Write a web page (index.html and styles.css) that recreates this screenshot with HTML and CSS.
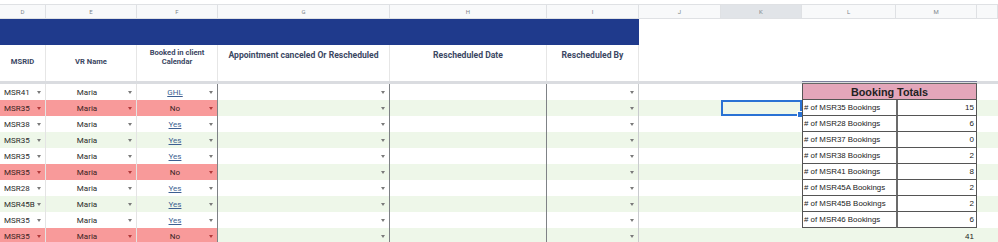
FILE: index.html
```html
<!DOCTYPE html>
<html>
<head>
<meta charset="utf-8">
<link rel="stylesheet" href="styles.css">
</head>
<body>
<div class="sheet">
  <div class="row colhead">
    <div class="c">D</div><div class="c">E</div><div class="c">F</div><div class="c">G</div><div class="c">H</div><div class="c">I</div><div class="c">J</div><div class="c sel">K</div><div class="c">L</div><div class="c">M</div><div class="c"></div>
  </div>
  <div class="row band">
    <div class="blue"></div>
  </div>
  <div class="row titles">
    <div class="t small mid">MSRID</div>
    <div class="t small mid">VR Name</div>
    <div class="t small top">Booked in client<br>Calendar</div>
    <div class="t big">Appointment canceled Or Rescheduled</div>
    <div class="t big">Rescheduled Date</div>
    <div class="t big last">Rescheduled By</div>
  </div>
  <div class="row freeze"><div class="fz-left"></div><div class="fz-tbl"></div><div></div></div>

  <div class="row data w">
    <div class="d id"><span>MSR41</span><i class="ar"></i></div>
    <div class="d nm"><span>Maria</span><i class="ar"></i></div>
    <div class="d bk"><span class="lk">GHL</span><i class="ar"></i></div>
    <div class="d g1"><i class="ar"></i></div>
    <div class="d h1"></div>
    <div class="d i1"><i class="ar"></i></div>
    <div class="d"></div><div class="d"></div>
    <div class="d tothead">Booking Totals</div>
    <div class="d"></div>
  </div>
  <div class="row data g">
    <div class="d id red"><span>MSR35</span><i class="ar"></i></div>
    <div class="d nm red"><span>Maria</span><i class="ar"></i></div>
    <div class="d bk red"><span>No</span><i class="ar"></i></div>
    <div class="d g1"><i class="ar"></i></div>
    <div class="d h1"></div>
    <div class="d i1"><i class="ar"></i></div>
    <div class="d"></div><div class="d ksel"></div>
    <div class="d lab">#&nbsp;of MSR35 Bookings</div><div class="d val">15</div>
    <div class="d"></div>
  </div>
  <div class="row data w">
    <div class="d id"><span>MSR38</span><i class="ar"></i></div>
    <div class="d nm"><span>Maria</span><i class="ar"></i></div>
    <div class="d bk"><span class="lk">Yes</span><i class="ar"></i></div>
    <div class="d g1"><i class="ar"></i></div>
    <div class="d h1"></div>
    <div class="d i1"><i class="ar"></i></div>
    <div class="d"></div><div class="d"></div>
    <div class="d lab">#&nbsp;of MSR28 Bookings</div><div class="d val">6</div>
    <div class="d"></div>
  </div>
  <div class="row data g">
    <div class="d id"><span>MSR35</span><i class="ar"></i></div>
    <div class="d nm"><span>Maria</span><i class="ar"></i></div>
    <div class="d bk"><span class="lk">Yes</span><i class="ar"></i></div>
    <div class="d g1"><i class="ar"></i></div>
    <div class="d h1"></div>
    <div class="d i1"><i class="ar"></i></div>
    <div class="d"></div><div class="d"></div>
    <div class="d lab">#&nbsp;of MSR37 Bookings</div><div class="d val">0</div>
    <div class="d"></div>
  </div>
  <div class="row data w">
    <div class="d id"><span>MSR35</span><i class="ar"></i></div>
    <div class="d nm"><span>Maria</span><i class="ar"></i></div>
    <div class="d bk"><span class="lk">Yes</span><i class="ar"></i></div>
    <div class="d g1"><i class="ar"></i></div>
    <div class="d h1"></div>
    <div class="d i1"><i class="ar"></i></div>
    <div class="d"></div><div class="d"></div>
    <div class="d lab">#&nbsp;of MSR38 Bookings</div><div class="d val">2</div>
    <div class="d"></div>
  </div>
  <div class="row data g">
    <div class="d id red"><span>MSR35</span><i class="ar"></i></div>
    <div class="d nm red"><span>Maria</span><i class="ar"></i></div>
    <div class="d bk red"><span>No</span><i class="ar"></i></div>
    <div class="d g1"><i class="ar"></i></div>
    <div class="d h1"></div>
    <div class="d i1"><i class="ar"></i></div>
    <div class="d"></div><div class="d"></div>
    <div class="d lab">#&nbsp;of MSR41 Bookings</div><div class="d val">8</div>
    <div class="d"></div>
  </div>
  <div class="row data w">
    <div class="d id"><span>MSR28</span><i class="ar"></i></div>
    <div class="d nm"><span>Maria</span><i class="ar"></i></div>
    <div class="d bk"><span class="lk">Yes</span><i class="ar"></i></div>
    <div class="d g1"><i class="ar"></i></div>
    <div class="d h1"></div>
    <div class="d i1"><i class="ar"></i></div>
    <div class="d"></div><div class="d"></div>
    <div class="d lab">#&nbsp;of MSR45A Bookings</div><div class="d val">2</div>
    <div class="d"></div>
  </div>
  <div class="row data g">
    <div class="d id"><span>MSR45B</span><i class="ar"></i></div>
    <div class="d nm"><span>Maria</span><i class="ar"></i></div>
    <div class="d bk"><span class="lk">Yes</span><i class="ar"></i></div>
    <div class="d g1"><i class="ar"></i></div>
    <div class="d h1"></div>
    <div class="d i1"><i class="ar"></i></div>
    <div class="d"></div><div class="d"></div>
    <div class="d lab">#&nbsp;of MSR45B Bookings</div><div class="d val">2</div>
    <div class="d"></div>
  </div>
  <div class="row data w">
    <div class="d id"><span>MSR35</span><i class="ar"></i></div>
    <div class="d nm"><span>Maria</span><i class="ar"></i></div>
    <div class="d bk"><span class="lk">Yes</span><i class="ar"></i></div>
    <div class="d g1"><i class="ar"></i></div>
    <div class="d h1"></div>
    <div class="d i1"><i class="ar"></i></div>
    <div class="d"></div><div class="d"></div>
    <div class="d lab">#&nbsp;of MSR46 Bookings</div><div class="d val">6</div>
    <div class="d"></div>
  </div>
  <div class="row data g">
    <div class="d id red"><span>MSR35</span><i class="ar"></i></div>
    <div class="d nm red"><span>Maria</span><i class="ar"></i></div>
    <div class="d bk red"><span>No</span><i class="ar"></i></div>
    <div class="d g1"><i class="ar"></i></div>
    <div class="d h1"></div>
    <div class="d i1"><i class="ar"></i></div>
    <div class="d"></div><div class="d"></div>
    <div class="d"></div><div class="d sum">41</div>
    <div class="d"></div>
  </div>
</div>
</body>
</html>
```
FILE: styles.css
```css
* { box-sizing: border-box; }
html, body { margin: 0; padding: 0; background: #fff; overflow: hidden; }
body { font-family: Roboto, "Liberation Sans", Arial, sans-serif; color: #2a2a2a; }

.sheet { padding-top: 4px; width: 998px; }

.row {
  display: grid;
  grid-template-columns: 46px 91px 81px 172px 157px 92px 82px 81px 94px 81px 21px;
}

/* column letters */
.colhead { height: 15px; }
.colhead .c {
  background: #f8f9fa;
  border-top: 1px solid #dfe1e4;
  border-bottom: 1px solid #dfe1e4;
  border-right: 1px solid #dfe1e4;
  font-size: 6px;
  color: #80868b;
  display: flex;
  align-items: center;
  justify-content: center;
}
.colhead .c.sel { background: #e1e4e8; }

/* blue band */
.band { height: 26px; }
.band .blue { grid-column: 1 / 7; background: #1f3a8c; }

/* titles */
.titles { height: 36px; }
.titles .t {
  display: flex;
  justify-content: center;
  text-align: center;
  font-weight: 700;
  color: #3b4763;
  border-right: 1px solid #e6e6e6;
}
.titles .t.last { border-right: 1px solid #e6e6e6; }
.titles .small { font-size: 7.6px; line-height: 9px; }
.titles .mid { align-items: center; padding-bottom: 4px; }
.titles .top { align-items: flex-start; padding-top: 3px; }
.titles .big { font-size: 8.6px; line-height: 11px; align-items: flex-start; padding-top: 5px; }

/* freeze line */
.freeze { height: 3px; }
.freeze .fz-left { grid-column: 1 / 9; background: #dadce0; }
.freeze .fz-tbl { grid-column: 9 / 11; background: #dadce0; border-top: 1px solid #7c7f9c; border-bottom: 1px solid #666; }
.freeze > div:last-child { background: #dadce0; }

/* data rows */
.data { height: 16px; font-size: 8px; }
.data.w { background: #fff; }
.data.g { background: #eef7e9; }
.d { display: flex; align-items: center; position: relative; min-width: 0; }
.d.red { background: #f89a9a; color: #3a1f1f; }

.d.id { border-right: 1px solid #e4e4e4; padding-left: 4px; justify-content: space-between; }
.d.nm { border-right: 1px solid #e4e4e4; }
.d.nm span, .d.bk span { flex: 1; text-align: center; }
.d.bk span { padding-left: 4px; }
.d.bk { border-right: 1px solid #7f8286; }
.d.g1 { border-right: 1px solid #7f8286; justify-content: flex-end; }
.d.h1 { border-right: 1px solid #7f8286; }
.d.i1 { border-right: 1px solid #c9cbce; justify-content: flex-end; }

.lk { color: #3d5f91; text-decoration: underline; }

.ar {
  display: block;
  width: 0; height: 0;
  border-left: 2.5px solid transparent;
  border-right: 2.5px solid transparent;
  border-top: 3px solid #7a7a7a;
  margin-right: 4px;
  flex: none;
}
.d.red .ar { border-top-color: #b23a3a; }

/* selected cell */
.ksel { border: 2px solid #2a72d4; }
.ksel::after {
  content: "";
  position: absolute;
  right: -4px;
  bottom: -4px;
  width: 5px;
  height: 5px;
  background: #2a72d4;
  border: 1px solid #fff;
}

/* booking totals */
.tothead {
  grid-column: span 2;
  background: #e4a6ba;
  font-family: "Liberation Sans", Arial, sans-serif;
  font-weight: 700;
  font-size: 10.8px;
  color: #222;
  justify-content: center;
  border-left: 1px solid #555;
  border-right: 1px solid #555;
  border-bottom: 1px solid #555;
}
.lab {
  background: #fff;
  font-family: "Liberation Sans", Arial, sans-serif;
  font-size: 7.9px;
  color: #222;
  padding-left: 1px;
  border-left: 1px solid #555;
  border-bottom: 1px solid #555;
  white-space: nowrap;
}
.val {
  background: #fff;
  font-family: "Liberation Sans", Arial, sans-serif;
  font-size: 8px;
  color: #222;
  justify-content: flex-end;
  padding-right: 2px;
  border-left: 2px solid #6b6b6b;
  border-right: 1px solid #555;
  border-bottom: 1px solid #555;
}
.sum {
  font-family: "Liberation Sans", Arial, sans-serif;
  font-size: 8px;
  color: #222;
  justify-content: flex-end;
  padding-right: 3px;
}
```
